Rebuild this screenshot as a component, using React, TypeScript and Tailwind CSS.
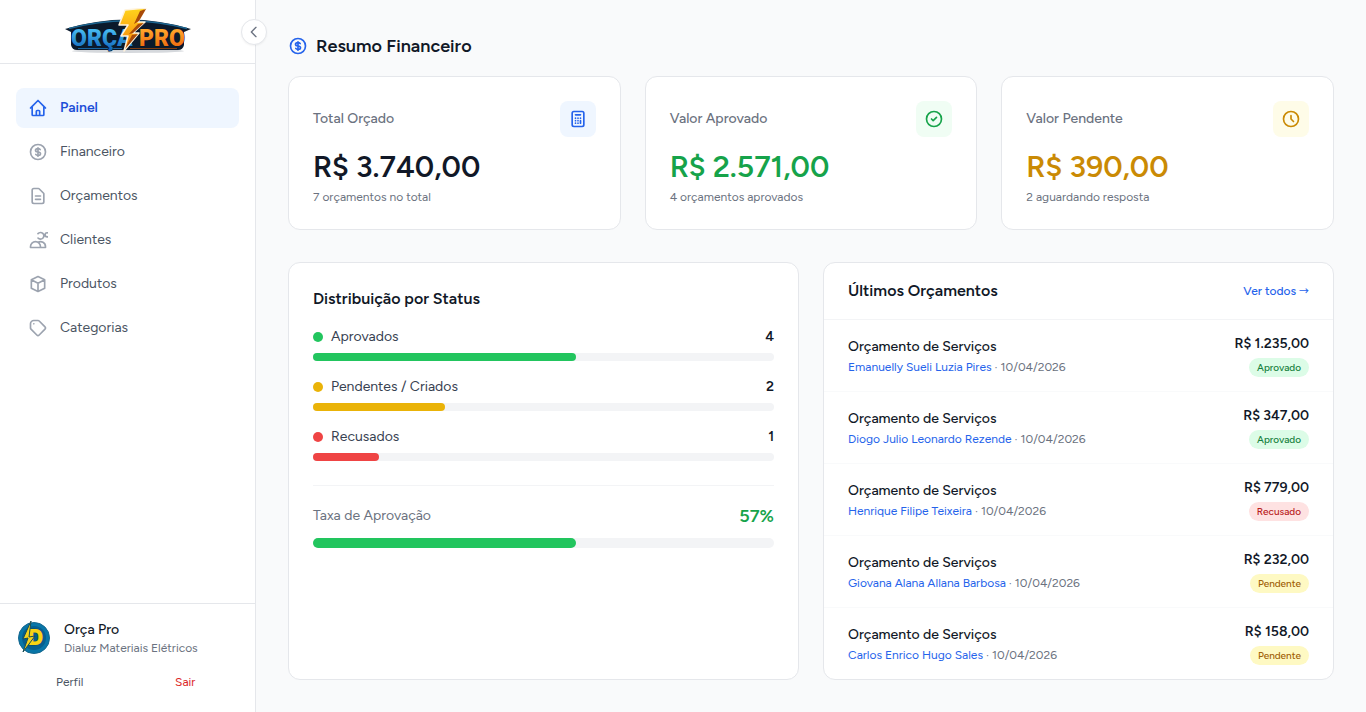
import type React from "react"

const navItems = [
  {
    label: "Painel",
    active: true,
    path: "M3 12l2-2m0 0l7-7 7 7M5 10v10a1 1 0 001 1h3m10-11l2 2m-2-2v10a1 1 0 01-1 1h-3m-6 0a1 1 0 001-1v-4a1 1 0 011-1h2a1 1 0 011 1v4a1 1 0 001 1m-6 0h6",
  },
  {
    label: "Financeiro",
    path: "M12 8c-1.657 0-3 .895-3 2s1.343 2 3 2 3 .895 3 2-1.343 2-3 2m0-8c1.11 0 2.08.402 2.599 1M12 8V7m0 1v8m0 0v1m0-1c-1.11 0-2.08-.402-2.599-1M21 12a9 9 0 11-18 0 9 9 0 0118 0z",
  },
  {
    label: "Orçamentos",
    path: "M9 12h6m-6 4h6m2 5H7a2 2 0 01-2-2V5a2 2 0 012-2h5.586a1 1 0 01.707.293l5.414 5.414a1 1 0 01.293.707V19a2 2 0 01-2 2z",
  },
  {
    label: "Clientes",
    path: "M12 4.354a4 4 0 110 5.292M15 21H3v-1a6 6 0 0112 0v1zm0 0h6v-1a6 6 0 00-9-5.197m13.5-9a2.5 2.5 0 11-5 0 2.5 2.5 0 015 0z",
  },
  {
    label: "Produtos",
    path: "M20 7l-8-4-8 4m16 0l-8 4m8-4v10l-8 4m0-10L4 7m8 4v10M4 7v10l8 4",
  },
  {
    label: "Categorias",
    path: "M7 7h.01M7 3h5c.512 0 1.024.195 1.414.586l7 7a2 2 0 010 2.828l-7 7a2 2 0 01-2.828 0l-7-7A1.994 1.994 0 013 12V7a4 4 0 014-4z",
  },
]

const moneyPath = navItems[1].path
const calculatorPath =
  "M9 7h6m0 10v-3m-3 3h.01M9 17h.01M9 14h.01M12 14h.01M15 11h.01M12 11h.01M9 11h.01M7 21h10a2 2 0 002-2V5a2 2 0 00-2-2H7a2 2 0 00-2 2v14a2 2 0 002 2z"
const checkPath = "M9 12l2 2 4-4m6 2a9 9 0 11-18 0 9 9 0 0118 0z"
const clockPath = "M12 8v4l3 3m6-3a9 9 0 11-18 0 9 9 0 0118 0z"

const statuses = [
  { label: "Aprovados", count: 4, color: "bg-[#22c55e]" },
  { label: "Pendentes / Criados", count: 2, color: "bg-[#eab308]" },
  { label: "Recusados", count: 1, color: "bg-[#ef4444]" },
]

const total = 7

const badgeStyles: Record<string, string> = {
  Aprovado: "bg-[#dcfce7] text-[#15803d]",
  Recusado: "bg-[#fee2e2] text-[#b91c1c]",
  Pendente: "bg-[#fef9c3] text-[#a16207]",
}

const quotes = [
  { client: "Emanuelly Sueli Luzia Pires", value: "R$ 1.235,00", status: "Aprovado" },
  { client: "Diogo Julio Leonardo Rezende", value: "R$ 347,00", status: "Aprovado" },
  { client: "Henrique Filipe Teixeira", value: "R$ 779,00", status: "Recusado" },
  { client: "Giovana Alana Allana Barbosa", value: "R$ 232,00", status: "Pendente" },
  { client: "Carlos Enrico Hugo Sales", value: "R$ 158,00", status: "Pendente" },
]

export default function App() {
  return (
    <div className="flex min-h-screen bg-[#f9fafb] font-['Figtree','Inter',sans-serif] text-[#111827]">
      <Sidebar />

      <main className="min-w-0 flex-1 p-8">
        <section className="mb-8">
          <h2 className="mb-4 flex items-center gap-2 text-lg font-semibold">
            <Icon path={moneyPath} className="size-5 text-[#2563eb]" />
            Resumo Financeiro
          </h2>
          <div className="grid grid-cols-3 gap-6">
            <SummaryCard
              title="Total Orçado"
              value="R$ 3.740,00"
              note="7 orçamentos no total"
              icon={calculatorPath}
              iconClass="bg-[#eff6ff] text-[#2563eb]"
              valueClass="text-[#111827]"
            />
            <SummaryCard
              title="Valor Aprovado"
              value="R$ 2.571,00"
              note="4 orçamentos aprovados"
              icon={checkPath}
              iconClass="bg-[#f0fdf4] text-[#16a34a]"
              valueClass="text-[#16a34a]"
            />
            <SummaryCard
              title="Valor Pendente"
              value="R$ 390,00"
              note="2 aguardando resposta"
              icon={clockPath}
              iconClass="bg-[#fefce8] text-[#ca8a04]"
              valueClass="text-[#ca8a04]"
            />
          </div>
        </section>

        <div className="grid grid-cols-2 gap-6">
          <StatusPanel />
          <QuotesPanel />
        </div>
      </main>
    </div>
  )
}

function Sidebar() {
  return (
    <aside className="relative flex w-64 shrink-0 flex-col border-r border-[#e5e7eb] bg-white">
      <div className="flex h-16 items-center justify-center border-b border-[#e5e7eb]">
        <a href="#painel" aria-label="Orça Pro">
          <Logo />
        </a>
      </div>
      <button
        type="button"
        aria-label="Recolher menu"
        className="absolute top-[19px] -right-3 flex size-[26px] items-center justify-center rounded-full border border-[#e5e7eb] bg-white text-[#6b7280] shadow-xs"
      >
        <Icon path="M15 19l-7-7 7-7" className="size-4" />
      </button>

      <nav className="flex-1 space-y-1 px-4 pt-6">
        {navItems.map((item) => (
          <a
            key={item.label}
            href="#"
            className={
              item.active
                ? "flex h-10 items-center gap-3 rounded-lg bg-[#eff6ff] px-3 text-sm font-semibold text-[#1d4ed8]"
                : "flex h-10 items-center gap-3 rounded-lg px-3 text-sm text-[#4b5563]"
            }
          >
            <Icon path={item.path} className={item.active ? "size-5 text-[#2563eb]" : "size-5 text-[#9ca3af]"} />
            {item.label}
          </a>
        ))}
      </nav>

      <div className="border-t border-[#e5e7eb] p-4">
        <div className="flex items-center gap-3">
          <Avatar />
          <div className="min-w-0">
            <p className="text-sm font-medium">Orça Pro</p>
            <p className="text-xs text-[#6b7280]">Dialuz Materiais Elétricos</p>
          </div>
        </div>
        <div className="mt-3 grid grid-cols-2 gap-2 text-center text-xs">
          <a href="#perfil" className="py-1.5 text-[#4b5563]">
            Perfil
          </a>
          <button type="button" className="py-1.5 text-[#dc2626]">
            Sair
          </button>
        </div>
      </div>
    </aside>
  )
}

function SummaryCard({
  title,
  value,
  note,
  icon,
  iconClass,
  valueClass,
}: {
  title: string
  value: string
  note: string
  icon: string
  iconClass: string
  valueClass: string
}) {
  return (
    <div className="rounded-xl border border-[#e5e7eb] bg-white p-6">
      <div className="mb-3 flex items-center justify-between">
        <p className="text-sm font-medium text-[#6b7280]">{title}</p>
        <div className={`rounded-lg p-2 ${iconClass}`}>
          <Icon path={icon} className="size-5" />
        </div>
      </div>
      <p className={`text-3xl font-semibold ${valueClass}`}>{value}</p>
      <p className="mt-1 text-xs text-[#6b7280]">{note}</p>
    </div>
  )
}

function StatusPanel() {
  return (
    <section className="rounded-xl border border-[#e5e7eb] bg-white p-6">
      <h3 className="mb-4 text-base font-semibold">Distribuição por Status</h3>
      <div className="space-y-4">
        {statuses.map((status) => (
          <div key={status.label}>
            <div className="mb-1.5 flex items-center justify-between text-sm">
              <span className="flex items-center gap-2 text-[#374151]">
                <span className={`size-2.5 rounded-full ${status.color}`} />
                {status.label}
              </span>
              <span className="font-semibold">{status.count}</span>
            </div>
            <div className="h-2 rounded-full bg-[#f3f4f6]">
              <div
                className={`h-2 rounded-full ${status.color}`}
                style={{ width: `${(status.count / total) * 100}%` }}
              />
            </div>
          </div>
        ))}
      </div>
      <div className="mt-6 border-t border-[#f3f4f6] pt-4">
        <div className="mb-2 flex items-center justify-between">
          <span className="text-sm text-[#6b7280]">Taxa de Aprovação</span>
          <span className="text-lg font-semibold text-[#16a34a]">57%</span>
        </div>
        <div className="h-2.5 rounded-full bg-[#f3f4f6]">
          <div className="h-2.5 rounded-full bg-[#22c55e]" style={{ width: "57%" }} />
        </div>
      </div>
    </section>
  )
}

function QuotesPanel() {
  return (
    <section className="rounded-xl border border-[#e5e7eb] bg-white">
      <div className="flex items-center justify-between border-b border-[#f3f4f6] px-6 py-4">
        <h3 className="text-base font-semibold">Últimos Orçamentos</h3>
        <a href="#orcamentos" className="text-xs font-medium text-[#2563eb]">
          Ver todos <span className="font-['Noto_Sans_CJK_JP',sans-serif] text-[10px] leading-none">→</span>
        </a>
      </div>
      <ul className="divide-y divide-[#f9fafb]">
        {quotes.map((quote) => (
          <li key={quote.client} className="flex items-center justify-between px-6 py-3.5">
            <div>
              <p className="text-sm font-medium">Orçamento de Serviços</p>
              <p className="mt-0.5 text-xs text-[#6b7280]">
                <a href="#clientes" className="text-[#2563eb]">
                  {quote.client}
                </a>{" "}
                · 10/04/2026
              </p>
            </div>
            <div className="flex flex-col items-end gap-1">
              <p className="text-sm font-semibold">{quote.value}</p>
              <span
                className={`rounded-full px-2 py-0.5 text-[10px] leading-[15px] font-medium ${badgeStyles[quote.status]}`}
              >
                {quote.status}
              </span>
            </div>
          </li>
        ))}
      </ul>
    </section>
  )
}

function Icon({ path, className }: { path: string; className: string }) {
  return (
    <svg
      className={className}
      fill="none"
      stroke="currentColor"
      strokeWidth="2"
      strokeLinecap="round"
      strokeLinejoin="round"
      viewBox="0 0 24 24"
    >
      <path d={path} />
    </svg>
  )
}

function Logo(): React.ReactElement {
  return (
    <svg className="h-12 w-32" viewBox="0 0 128 48">
      <defs>
        <linearGradient id="orca" x1="0" y1="0" x2="0" y2="1">
          <stop offset="0.2" stopColor="#45b8f0" />
          <stop offset="1" stopColor="#0a5cb4" />
        </linearGradient>
        <linearGradient id="pro" x1="0" y1="0" x2="0" y2="1">
          <stop offset="0.2" stopColor="#ffa42a" />
          <stop offset="1" stopColor="#e85a08" />
        </linearGradient>
        <linearGradient id="bolt" x1="0" y1="0" x2="0" y2="1">
          <stop offset="0" stopColor="#ffd51c" />
          <stop offset="1" stopColor="#f77f0b" />
        </linearGradient>
      </defs>
      <ellipse cx="64" cy="43" rx="56" ry="2" fill="#d5d8dc" />
      <path d="M1 21Q64 2 127 21L120 24V37Q119 42 114 42H13Q8 42 7 37V24Z" fill="#0b1a2c" />
      <path d="M5 20.500Q64 5 123 20.500" fill="none" stroke="#1c6590" strokeWidth="1.500" />
      <path d="M14 40.500H58" stroke="#17639c" />
      <path d="M66 40.500H113" stroke="#7c3d12" />
      <g
        fontFamily="Roboto, sans-serif"
        fontWeight="900"
        fontSize="24"
        stroke="#071525"
        strokeWidth="1"
        paintOrder="stroke"
      >
        <text x="7" y="38" fontSize="23" fill="url(#orca)">
          ORÇA
        </text>
        <text x="75" y="38" fontSize="23" fill="url(#pro)">
          PRO
        </text>
      </g>
      <path
        d="M61 2L82 0L74 14H81L69 25H75L60 43L64 28H57L64 17H55Z"
        fill="url(#bolt)"
        stroke="#fff3dc"
        strokeWidth="1.500"
        strokeLinejoin="round"
      />
      <path d="M82 1L75 13L70 16L76 3ZM80 15L69 25L65 26L74 16ZM74 26L61 41L68 27Z" fill="#a84a09" />
    </svg>
  )
}

function Avatar() {
  return (
    <svg className="size-9" viewBox="0 0 36 36">
      <circle cx="18" cy="18" r="15.500" fill="#0876a8" stroke="#16688f" />
      <circle cx="18" cy="18" r="12" fill="#075f8f" />
      <text
        x="12"
        y="25"
        fontFamily="Inter, sans-serif"
        fontWeight="900"
        fontSize="21"
        fill="#f8d414"
        stroke="#124b58"
        strokeWidth="1"
        paintOrder="stroke"
      >
        D
      </text>
      <path d="M15 1L7 19L12 18L7 32L19 16L13 17Z" fill="#f5d31c" stroke="#174d58" strokeWidth="1" />
    </svg>
  )
}
